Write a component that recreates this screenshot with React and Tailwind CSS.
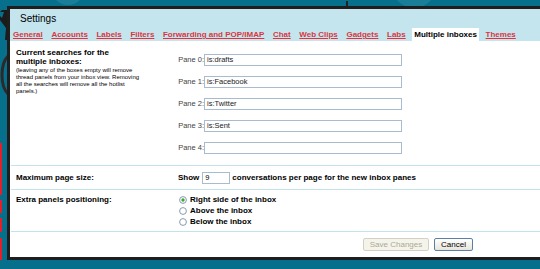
import React from "react";

const tabs = [
  "General",
  "Accounts",
  "Labels",
  "Filters",
  "Forwarding and POP/IMAP",
  "Chat",
  "Web Clips",
  "Gadgets",
  "Labs",
  "Multiple inboxes",
  "Themes",
];

const panes = ["is:drafts", "is:Facebook", "is:Twitter", "is:Sent", ""];

function Radio({ checked }) {
  return (
    <svg width="8" height="8" viewBox="0 0 8 8" className="shrink-0">
      <circle cx="4" cy="4" r="3.4" fill="#fff" stroke="#7b8ea5" strokeWidth="0.9" />
      {checked && <circle cx="4" cy="4" r="1.7" fill="#3aaa35" />}
    </svg>
  );
}

export default function App() {
  return (
    <div className="relative w-[540px] h-[269px] overflow-hidden bg-[#06708c] font-['Liberation_Sans',Arial,sans-serif]">
      <svg className="absolute inset-0" width="540" height="269" viewBox="0 0 540 269">
        <circle cx="68" cy="-12" r="17" fill="#1a7e98" />
        <circle cx="414" cy="-14" r="22" fill="#1a7e98" />
        <rect x="346" y="1" width="2" height="6" fill="#222" />
        <polygon points="2,10 16,10 10,30 8,40 5,40 6,28 0,20 0,12" fill="#1b1b1b" />
        <polygon points="0,12 4,12 2,18 0,16" fill="#06708c" />
        <path d="M8 56 C 0 64, 0 86, 8 94" stroke="#2a2a2a" strokeWidth="3" fill="none" />
        <rect x="0" y="143" width="2" height="52" fill="#e0202a" />
        <rect x="0" y="200" width="2" height="13" fill="#e0202a" />
        <rect x="0" y="218" width="2" height="14" fill="#e0202a" />
        <rect x="0" y="238" width="2" height="22" fill="#e0202a" />
      </svg>

      <div className="relative ml-[7px] mt-[6px] w-[540px] h-[254px] border-t-[3px] border-l-[3px] border-b-[3px] border-[#1e1e1e] bg-white flex flex-col">
        {/* Header */}
        <div className="h-[32px] bg-[#c4e5ee] flex flex-col justify-between">
          <div className="pl-[10px] pt-[4px] text-[10px] leading-[12px] text-black">Settings</div>
          <div className="flex h-[13px] items-stretch pl-[1px] gap-[4.6px]">
            {tabs.map((t) =>
              t === "Multiple inboxes" ? (
                <div key={t} className="bg-white px-[2px] text-[8px] leading-[13px] font-bold text-black whitespace-nowrap">
                  {t}
                </div>
              ) : (
                <div key={t} className="px-[2px] text-[8px] leading-[13px] font-bold text-[#dd3540] underline whitespace-nowrap">
                  {t}
                </div>
              )
            )}
          </div>
        </div>

        {/* Section 1 */}
        <div className="h-[124px] flex">
          <div className="w-[168px] pl-[6px] pt-[8px]">
            <div className="w-[122px] text-[8px] leading-[8.5px] font-bold text-black">
              Current searches for the multiple inboxes:
            </div>
            <div className="w-[127px] mt-[1px] text-[6px] leading-[7px] text-black">
              (leaving any of the boxes empty will remove thread panels from your inbox view. Removing all the searches will remove all the hotlist panels.)
            </div>
          </div>
          <div className="pt-[13px] flex flex-col gap-[10px]">
            {panes.map((v, i) => (
              <div key={i} className="flex items-center h-[12px]">
                <div className="w-[26px] text-right text-[7.5px] text-[#444] whitespace-nowrap">Pane {i}:</div>
                <div className="w-[198px] h-[12px] border border-[#a9bccf] pl-[2px] text-[7.5px] leading-[10px] text-[#222]">
                  {v}
                </div>
              </div>
            ))}
          </div>
        </div>
        <div className="h-[1px] ml-[1px] bg-[#c3e2ec]" />

        {/* Section 2 */}
        <div className="h-[23px] flex items-center">
          <div className="w-[168px] pl-[6px] text-[8px] font-bold text-black">Maximum page size:</div>
          <div className="flex items-center text-[8px] font-bold text-black whitespace-nowrap">
            <span>Show</span>
            <div className="ml-[3px] w-[28px] h-[12px] border border-[#a9bccf] pl-[2px] text-[7.5px] leading-[10px] font-normal">9</div>
            <span className="ml-[2px]">conversations per page for the new inbox panes</span>
          </div>
        </div>
        <div className="h-[1px] ml-[1px] bg-[#c3e2ec]" />

        {/* Section 3 */}
        <div className="h-[41px] flex pt-[4px]">
          <div className="w-[168px] pl-[6px] text-[8px] leading-[11px] font-bold text-black">Extra panels positioning:</div>
          <div className="flex flex-col pl-[1px]">
            {["Right side of the inbox", "Above the inbox", "Below the inbox"].map((l, i) => (
              <div key={l} className="flex items-center h-[11px] gap-[3px] text-[8px] font-bold text-black whitespace-nowrap">
                <Radio checked={i === 0} />
                <span>{l}</span>
              </div>
            ))}
          </div>
        </div>
        <div className="h-[1px] ml-[1px] bg-[#c3e2ec]" />

        {/* Buttons */}
        <div className="flex-1 flex items-start pt-[6px] pl-[353px] gap-[5px]">
          <div className="w-[66px] h-[13px] flex items-center justify-center rounded-[2px] border border-[#d3d2c2] bg-[#f5f4ea] text-[8px] text-[#aca899]">
            Save Changes
          </div>
          <div className="w-[39px] h-[13px] flex items-center justify-center rounded-[2px] border border-[#5d7fa3] bg-gradient-to-b from-white to-[#e6e5dc] text-[8px] text-black">
            Cancel
          </div>
        </div>
      </div>
    </div>
  );
}
